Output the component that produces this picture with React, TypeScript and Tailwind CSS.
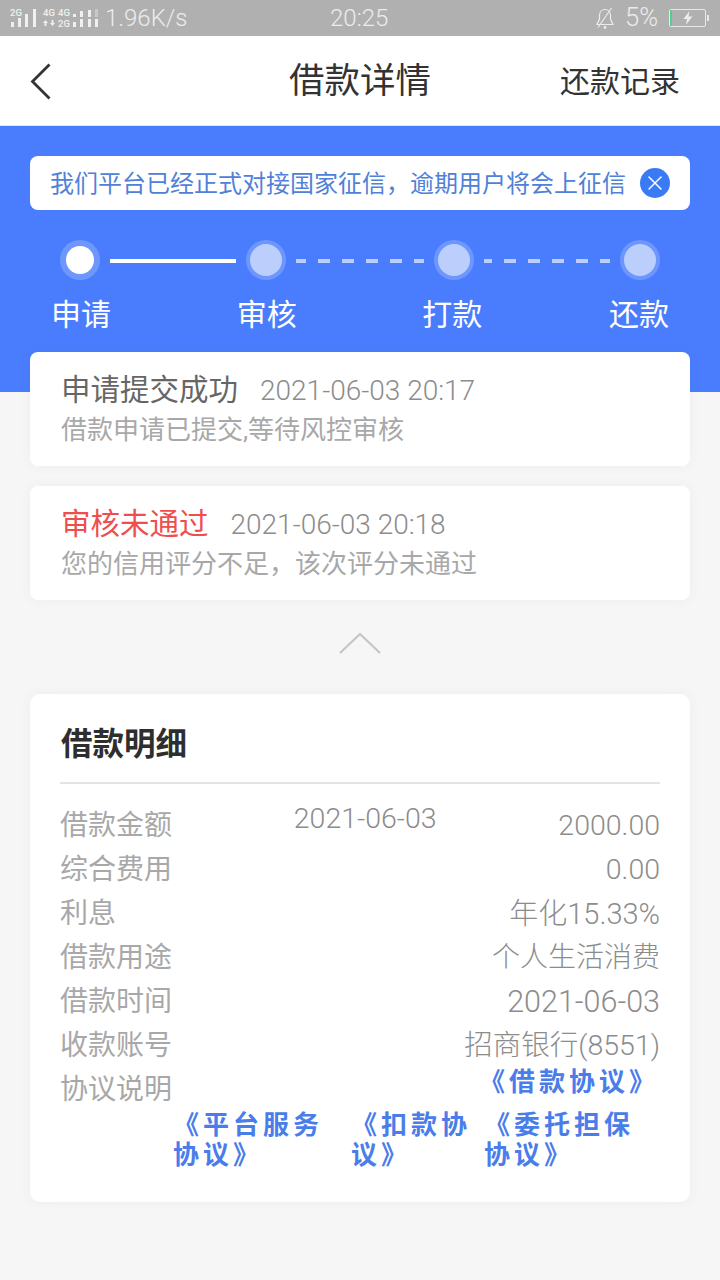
import { X } from "lucide-react";

const font = "font-['Roboto','Noto_Sans_CJK_SC',sans-serif]";

const details = [
  { label: "借款金额", value: "2000.00", extra: "2021-06-03", size: "text-[28.5px]" },
  { label: "综合费用", value: "0.00", size: "text-[28.5px]" },
  { label: "利息", value: "年化15.33%", size: "text-[29px]" },
  { label: "借款用途", value: "个人生活消费", size: "text-[28px]" },
  { label: "借款时间", value: "2021-06-03", size: "text-[30.5px]" },
  { label: "收款账号", value: "招商银行(8551)", size: "text-[28.5px]" },
];

// network cluster on the left of the status bar
function NetworkIcons() {
  return (
    <svg viewBox="0 0 100 36" className="h-[36px] w-[100px] font-medium" fill="#f0f0f0" fontSize="9.5">
      <text x="10" y="16">2G</text>
      <rect x="11" y="22" width="3" height="5" />
      <rect x="18" y="18" width="3" height="9" />
      <rect x="25" y="14" width="3" height="13" />
      <rect x="33" y="9" width="3" height="18" />
      <text x="43" y="16">4G</text>
      <path d="M45.5 20 48 23h-1.600v3h-1.800v-3H43zM52.500 26 50 23h1.600v-3h1.800v3H55z" />
      <text x="58" y="16">4G</text>
      <text x="58" y="27">2G</text>
      <rect x="73" y="14" width="3" height="3" />
      <rect x="73" y="22" width="3" height="5" />
      <rect x="80" y="19" width="3" height="8" />
      <rect x="80" y="11" width="3" height="6" />
      <rect x="88" y="19" width="3" height="8" />
      <rect x="88" y="10" width="3" height="7" />
      <rect x="95" y="19" width="3" height="8" />
      <rect x="95" y="9" width="3" height="8" fill="#c9c9c9" />
    </svg>
  );
}

function StatusBar() {
  return (
    <div className="relative flex h-[36px] items-center bg-[#b0b0b0] pr-[11px] font-light text-[#ececec]">
      <NetworkIcons />
      <span className="ml-[5px] text-[24px] leading-none">1.96K/s</span>
      <span className="absolute left-[330px] text-[24px] leading-none">20:25</span>
      <span className="ml-auto flex items-center">
        <svg viewBox="0 0 20 22" className="h-[22px] w-[20px]" fill="none" stroke="currentColor" strokeWidth="1.200">
          <path d="M10 2.500c-3.500 0-5.500 2.800-5.500 6v3.500L2 17.500h16L15.500 12V8.500c0-3.200-2-6-5.500-6z" />
          <path d="M16.500 1 3 20.500" />
          <circle cx="10" cy="20.500" r="0.800" fill="currentColor" />
        </svg>
        <span className="ml-[10px] text-[25.5px] leading-none">5%</span>
        <span className="relative ml-[11px] flex h-[18px] w-[37px] items-center justify-center rounded-[2px] border border-[#e8e8e8]">
          <span className="absolute bottom-0 left-0 top-0 w-[2px] bg-[#4fd08f]" />
          <svg viewBox="0 0 12 14" className="h-[14px] w-[12px]" fill="currentColor">
            <path d="M7.500 0 1.500 8h3.600L3.800 14 10.500 5.500H6.600z" />
          </svg>
        </span>
        <span className="ml-[1px] h-[6px] w-[2px] bg-[#e8e8e8]" />
      </span>
    </div>
  );
}

function Dot({ active }: { active?: boolean }) {
  return (
    <span className="flex h-[40px] w-[40px] shrink-0 items-center justify-center rounded-full bg-white/20">
      {active ? (
        <span className="h-[28px] w-[28px] rounded-full bg-white" />
      ) : (
        <span className="h-[32px] w-[32px] rounded-full bg-[#bccffc]" />
      )}
    </span>
  );
}

function Dashes({ first = 10, width }: { first?: number; width: string }) {
  const widths = [first, 12, 12, 12, 12, 10];
  return (
    <span className={`mx-[10px] flex items-center justify-between ${width}`}>
      {widths.map((w, i) => (
        <span key={i} className="mt-[2px] h-[4px] bg-[#bccffc]" style={{ width: w }} />
      ))}
    </span>
  );
}

function ProgressCard({
  title,
  date,
  sub,
  red,
}: {
  title: string;
  date: string;
  sub: string;
  red?: boolean;
}) {
  return (
    <div className="mx-[30px] h-[114px] rounded-[8px] bg-white px-[31px] pt-[21px] shadow-[0_0_12px_rgba(80,100,160,0.06)]">
      <div className="flex h-[36px] items-center gap-[22px]">
        <span className={`text-[29.5px] leading-none ${red ? "text-[#ee4e4e]" : "text-[#666666]"}`}>{title}</span>
        <span className="text-[28px] font-light leading-none text-[#8c8c8c]">{date}</span>
      </div>
      <div className="mt-[3px] text-[26px] leading-[36px] text-[#a8a8a8]">{sub}</div>
    </div>
  );
}

export default function App() {
  return (
    <div className={`${font} h-[1280px] w-[720px] overflow-hidden bg-[#f6f6f6]`}>
      <StatusBar />

      <header className="grid h-[90px] grid-cols-[1fr_auto_1fr] items-center border-b border-[#e6e6e6] bg-white px-[30px] pt-[2px]">
        <svg viewBox="0 0 21 37" className="h-[37px] w-[21px]" fill="none" stroke="#333333" strokeWidth="2.800">
          <path d="M19.500 1.500 2.500 18.500l17 17" />
        </svg>
        <h1 className="text-[35.5px] font-normal leading-none text-[#333333]">借款详情</h1>
        <span className="justify-self-end pr-[10px] text-[30px] leading-none text-[#333333]">还款记录</span>
      </header>

      <section className="h-[266px] bg-[#4a7dfd] px-[30px] pt-[30px]">
        <div className="flex h-[54px] items-center justify-between rounded-[8px] bg-white pl-[20px] pr-[20px]">
          <span className="pt-[2px] text-[24px] leading-none text-[#5081d8]">我们平台已经正式对接国家征信，逾期用户将会上征信</span>
          <span className="flex h-[30px] w-[30px] items-center justify-center rounded-full bg-[#3a7bf5]">
            <X className="h-[24px] w-[24px] text-white" strokeWidth={1.5} />
          </span>
        </div>

        <div className="mt-[30px] flex items-center px-[30px]">
          <Dot active />
          <span className="mx-[10px] mt-[2px] h-[4px] w-[126px] bg-white" />
          <Dot />
          <Dashes width="w-[128px]" />
          <Dot />
          <Dashes first={8} width="w-[126px]" />
          <Dot />
        </div>

        <div className="mt-[15px] flex justify-between px-[21px] text-[30px] leading-[40px] text-white">
          <span>申请</span>
          <span>审核</span>
          <span>打款</span>
          <span className="ml-[1px]">还款</span>
        </div>
      </section>

      <div className="mt-[-40px] flex flex-col gap-[20px]">
        <ProgressCard title="申请提交成功" date="2021-06-03 20:17" sub="借款申请已提交,等待风控审核" />
        <ProgressCard title="审核未通过" date="2021-06-03 20:18" sub="您的信用评分不足，该次评分未通过" red />
      </div>

      <div className="flex h-[94px] items-center justify-center">
        <svg viewBox="0 0 42 22" className="mb-[8px] h-[22px] w-[42px]" fill="none" stroke="#c6c6c6" strokeWidth="2.200">
          <path d="M1 21 21 2l20 19" />
        </svg>
      </div>

      <section className="mx-[30px] h-[508px] rounded-[10px] bg-white px-[30px] shadow-[0_0_12px_rgba(80,100,160,0.05)]">
        <div className="flex h-[90px] items-center border-b-2 border-[#e3e3e3] pl-px pt-[13px]">
          <h2 className="text-[31.5px] font-bold leading-none text-[#2e2e2e]">借款明细</h2>
        </div>

        <div className="mt-[20px] flex flex-col">
          {details.map((row) => (
            <div key={row.label} className="flex h-[44px] items-center justify-between text-[28px] leading-none text-[#a8a8a8]">
              <span>{row.label}</span>
              {row.extra && <span className="mb-[14px] text-[28.5px] font-light text-[#8c8c8c]">{row.extra}</span>}
              <span className={`font-light text-[#8c8c8c] ${row.size}`}>{row.value}</span>
            </div>
          ))}
        </div>

        <div className="flex h-[44px] items-center justify-between text-[28px] leading-none text-[#a8a8a8]">
          <span>协议说明</span>
          <span className="mb-[17px] mr-[1px] text-[26px] font-bold leading-[30px] tracking-[4px] text-[#4a7dea]">《借款协议》</span>
        </div>

        <div className="mt-[-2px] flex pl-[113px] text-[26px] font-bold leading-[30px] tracking-[4px] text-[#4a7dea]">
          <span className="w-[178px] pr-[10px]">《平台服务协议》</span>
          <span className="w-[133px]">《扣款协议》</span>
          <span className="w-[156px]">《委托担保协议》</span>
        </div>
      </section>
    </div>
  );
}
